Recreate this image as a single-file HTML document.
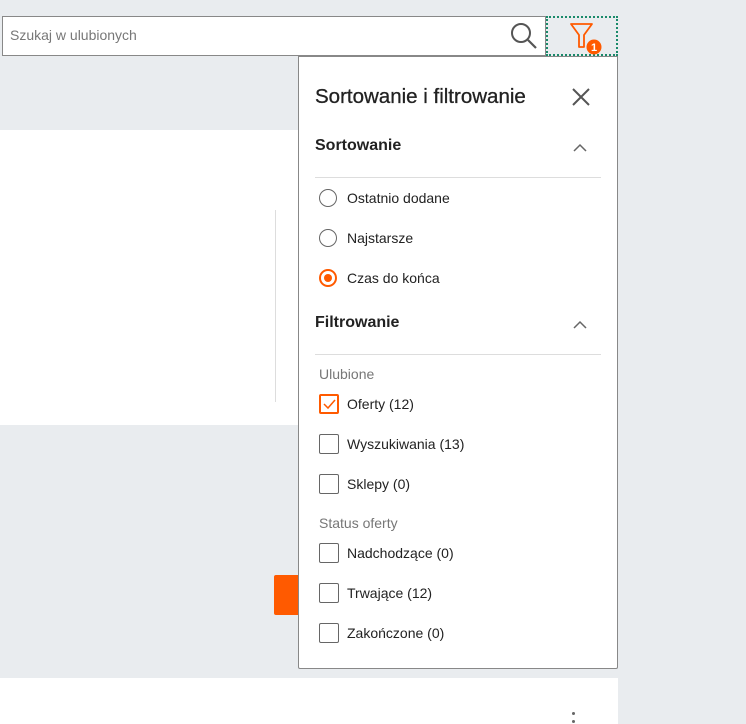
<!DOCTYPE html>
<html><head><style>
body{margin:0;width:746px;height:724px;background:#e9ecef;font-family:"Liberation Sans",sans-serif;position:relative;overflow:hidden}
.a{position:absolute}
.rad{position:absolute;left:319px;width:18px;height:18px;border:1.5px solid #666;border-radius:50%;box-sizing:border-box}
.cb{position:absolute;left:319px;width:20px;height:20px;border:1.5px solid #666;border-radius:2px;box-sizing:border-box}
.lb{position:absolute;left:347px;font-size:14px;color:#222}
.sub{position:absolute;left:319px;font-size:14px;color:#777}
.h{position:absolute;left:315px;font-size:16px;font-weight:bold;color:#222}
.hr{position:absolute;left:315px;width:286px;height:1px;background:#ddd}
</style></head><body>
<div class="a" style="left:0;top:130px;width:618px;height:295px;background:#fff"></div>
<div class="a" style="left:275px;top:210px;width:1px;height:192px;background:#ddd"></div>
<div class="a" style="left:274px;top:575px;width:30px;height:40px;background:#ff5a00;border-radius:2px"></div>
<div class="a" style="left:0;top:678px;width:618px;height:46px;background:#fff"></div>
<div class="a" style="left:572px;top:712px;width:3px;height:3px;background:#666;border-radius:50%"></div>
<div class="a" style="left:572px;top:720px;width:3px;height:3px;background:#666;border-radius:50%"></div>
<div class="a" style="left:2px;top:16px;width:544px;height:40px;background:#fff;border:1px solid #888;box-sizing:border-box"></div>
<div class="a" style="left:10px;top:27px;font-size:14px;color:#777">Szukaj w ulubionych</div>
<svg class="a" style="left:508px;top:20px" width="32" height="32"><circle cx="13" cy="13" r="9" fill="none" stroke="#555" stroke-width="2"/><line x1="20" y1="20" x2="28" y2="28" stroke="#555" stroke-width="2.2"/></svg>
<div class="a" style="left:546px;top:16px;width:72px;height:40px;border:2px dotted #1a8a6a;box-sizing:border-box"></div>
<svg class="a" style="left:568px;top:20px" width="36" height="36"><path d="M3 4 H24 L16 15 V27 H11 V15 Z" fill="none" stroke="#ff5a00" stroke-width="1.8" stroke-linejoin="round"/><circle cx="26" cy="27" r="7.5" fill="#ff5a00"/><text x="26" y="31" font-size="11" font-weight="bold" fill="#fff" text-anchor="middle" font-family="Liberation Sans">1</text></svg>
<div class="a" style="left:298px;top:56px;width:320px;height:613px;background:#fff;border:1px solid #888;box-sizing:border-box;border-radius:0 0 2px 2px"></div>
<div class="a" style="left:315px;top:85px;font-size:20.5px;color:#222;-webkit-text-stroke:0.3px #222">Sortowanie i filtrowanie</div>
<svg class="a" style="left:572px;top:88px" width="18" height="18"><path d="M1 1L17 17M17 1L1 17" stroke="#555" stroke-width="2"/></svg>
<div class="h" style="top:137px">Sortowanie</div>
<svg class="a" style="left:573px;top:143px" width="14" height="9"><path d="M1 8L7 2L13 8" fill="none" stroke="#666" stroke-width="1.5"/></svg>
<div class="hr" style="top:177px"></div>
<div class="rad" style="top:189px"></div><div class="lb" style="top:190px">Ostatnio dodane</div>
<div class="rad" style="top:229px"></div><div class="lb" style="top:230px">Najstarsze</div>
<div class="rad" style="top:269px;border:2px solid #ff5a00"><div style="position:absolute;left:3px;top:3px;width:8px;height:8px;border-radius:50%;background:#ff5a00"></div></div><div class="lb" style="top:270px">Czas do końca</div>
<div class="h" style="top:314px">Filtrowanie</div>
<svg class="a" style="left:573px;top:320px" width="14" height="9"><path d="M1 8L7 2L13 8" fill="none" stroke="#666" stroke-width="1.5"/></svg>
<div class="hr" style="top:354px"></div>
<div class="sub" style="top:366px">Ulubione</div>
<div class="cb" style="top:394px;border:2px solid #ff5a00"><svg width="16" height="16" style="position:absolute;left:0;top:0"><path d="M3 8L7 12L14 4" fill="none" stroke="#ff5a00" stroke-width="1.5"/></svg></div><div class="lb" style="top:396px">Oferty (12)</div>
<div class="cb" style="top:434px"></div><div class="lb" style="top:436px">Wyszukiwania (13)</div>
<div class="cb" style="top:474px"></div><div class="lb" style="top:476px">Sklepy (0)</div>
<div class="sub" style="top:515px">Status oferty</div>
<div class="cb" style="top:543px"></div><div class="lb" style="top:545px">Nadchodzące (0)</div>
<div class="cb" style="top:583px"></div><div class="lb" style="top:585px">Trwające (12)</div>
<div class="cb" style="top:623px"></div><div class="lb" style="top:625px">Zakończone (0)</div>
</body></html>
